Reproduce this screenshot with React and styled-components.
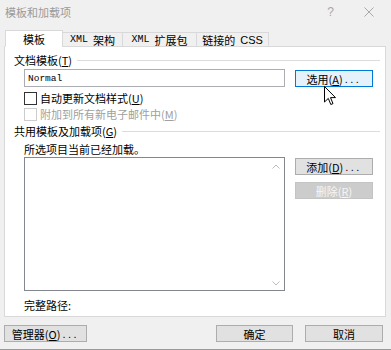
import React from "react";
import styled, { createGlobalStyle } from "styled-components";

const GlobalStyle = createGlobalStyle`
  html, body {
    margin: 0;
    padding: 0;
    background: #f0f0f0;
  }
  * {
    box-sizing: border-box;
  }
`;

const cjk = `"Noto Sans CJK SC", "Liberation Sans", sans-serif`;
const mono = `"Liberation Mono", "Noto Sans CJK SC", monospace`;

const Dialog = styled.div`
  position: relative;
  width: 391px;
  height: 350px;
  background: #f0f0f0;
  border-bottom: 1px solid #9a9a9a;
  font-family: ${cjk};
  font-size: 11px;
  color: #000;
  display: flex;
  flex-direction: column;
`;

const TitleBar = styled.div`
  height: 30px;
  display: flex;
  align-items: flex-start;
  padding: 4px 0 0 5px;
  color: #9a9a9a;
  font-size: 11px;
  line-height: 16px;
`;

const TitleText = styled.span`
  flex: 1;
`;

const TitleButtons = styled.div`
  display: flex;
  align-items: center;
  gap: 30px;
  padding-right: 17px;
  height: 16px;
`;

const HelpMark = styled.span`
  font-family: "Liberation Sans", sans-serif;
  font-size: 12px;
  color: #a8a8a8;
`;

const TabStrip = styled.div`
  display: flex;
  align-items: flex-end;
  margin: 0 0 -1px 5px;
  height: 17px;
  position: relative;
  z-index: 1;
`;

const Tab = styled.div`
  width: ${(p) => p.$w}px;
  height: ${(p) => (p.$active ? 17 : 15)}px;
  display: flex;
  align-items: center;
  justify-content: center;
  gap: 5px;
  background: ${(p) => (p.$active ? "#fff" : "#f0f0f0")};
  border: 1px solid #d9d9d9;
  border-bottom: ${(p) => (p.$active ? "1px solid #fff" : "1px solid #d9d9d9")};
  margin-left: ${(p) => (p.$active ? 0 : -1)}px;
  font-size: 11px;
  line-height: 14px;
`;

const Mono = styled.span`
  font-family: ${mono};
  font-size: 10px;
`;

const Latin = styled.span`
  font-family: "Liberation Sans", sans-serif;
`;

const Dots = styled.span`
  font-family: "Liberation Sans", sans-serif;
  letter-spacing: 2.5px;
  margin-left: 2px;
`;

const Panel = styled.div`
  height: 271px;
  margin: 0 5px 0 4px;
  background: #fff;
  border: 1px solid #d9d9d9;
  padding: 6px 5px 0 9px;
  display: flex;
  flex-direction: column;
`;

const GroupHeader = styled.div`
  display: flex;
  align-items: center;
  gap: 5px;
  height: 14px;
  margin-top: ${(p) => p.$top || 0}px;
  line-height: 14px;
  white-space: nowrap;

  &::after {
    content: "";
    flex: 1;
    height: 1px;
    background: #dcdcdc;
  }
`;

const Indented = styled.div`
  margin-left: 10px;
  margin-top: ${(p) => p.$top || 0}px;
`;

const FieldRow = styled.div`
  display: flex;
  align-items: flex-start;
  gap: 10px;
  margin: 2px 0 0 10px;
`;

const TextInput = styled.div`
  width: 261px;
  height: 18px;
  border: 1px solid #abadb3;
  background: #fff;
  padding: 0 3px;
  display: flex;
  align-items: center;
  font-family: ${mono};
  font-size: 9.5px;
`;

const Button = styled.div`
  width: ${(p) => p.$w || 78}px;
  height: 17px;
  margin-top: ${(p) => p.$top || 0}px;
  display: flex;
  align-items: center;
  justify-content: center;
  background: ${(p) =>
    p.$focus ? "#e5f1fb" : p.$disabled ? "#cccccc" : "#e1e1e1"};
  border: 1px solid
    ${(p) => (p.$focus ? "#0078d7" : p.$disabled ? "#c4c4c4" : "#adadad")};
  color: ${(p) => (p.$disabled ? "#f6f6f6" : "#000")};
  font-size: 11px;
  line-height: 14px;
  white-space: nowrap;
`;

const CheckRow = styled.div`
  display: flex;
  align-items: center;
  gap: 3px;
  height: 16px;
  margin: ${(p) => p.$top || 0}px 0 0 10px;
  color: ${(p) => (p.$disabled ? "#a0a0a0" : "#000")};
`;

const Box = styled.span`
  width: 13px;
  height: 13px;
  border: 1px solid ${(p) => (p.$disabled ? "#cccccc" : "#333")};
  background: #fff;
`;

const ListArea = styled.div`
  display: flex;
  align-items: flex-start;
  gap: 10px;
  margin-left: 10px;
`;

const ListBox = styled.div`
  width: 261px;
  height: 134px;
  border: 1px solid #828790;
  background: #fff;
  display: flex;
  justify-content: flex-end;
`;

const ScrollTrack = styled.div`
  width: 15px;
  display: flex;
  flex-direction: column;
  justify-content: space-between;
  align-items: center;
  padding: 6px 2px 4px 0;
`;

const SideButtons = styled.div`
  display: flex;
  flex-direction: column;
  gap: 7px;
  padding-top: 1px;
`;

const ButtonBar = styled.div`
  display: flex;
  justify-content: space-between;
  align-items: center;
  margin-top: 8px;
  padding: 0 8px 0 4px;
`;

const ButtonGroup = styled.div`
  display: flex;
  gap: 12px;
`;

const Cursor = styled.svg`
  position: absolute;
  left: 324px;
  top: 86px;
`;

const Chevron = ({ up }) => (
  <svg width="8" height="5" viewBox="0 0 8 5">
    <path
      d={up ? "M0.5 4.5 L4 1 L7.5 4.5" : "M0.5 0.5 L4 4 L7.5 0.5"}
      fill="none"
      stroke="#bdbdbd"
      strokeWidth="1"
    />
  </svg>
);

const CloseIcon = () => (
  <svg width="10" height="10" viewBox="0 0 10 10">
    <path d="M0.5 0.5 L9.5 9.5 M9.5 0.5 L0.5 9.5" stroke="#a8a8a8" strokeWidth="1" />
  </svg>
);

const App = () => {
  return (
    <>
      <GlobalStyle />
      <Dialog>
        <TitleBar>
          <TitleText>模板和加载项</TitleText>
          <TitleButtons>
            <HelpMark>?</HelpMark>
            <CloseIcon />
          </TitleButtons>
        </TitleBar>

        <TabStrip>
          <Tab $w={58} $active>模板</Tab>
          <Tab $w={61}>
            <Mono>XML</Mono>架构
          </Tab>
          <Tab $w={75}>
            <Mono>XML</Mono>扩展包
          </Tab>
          <Tab $w={73}>
            链接的 <Latin>CSS</Latin>
          </Tab>
        </TabStrip>

        <Panel>
          <GroupHeader>
            <span>
              文档模板(<u>T</u>)
            </span>
          </GroupHeader>
          <FieldRow>
            <TextInput>Normal</TextInput>
            <Button $focus $top={1}>
              选用(<u>A</u>)<Dots>...</Dots>
            </Button>
          </FieldRow>
          <CheckRow $top={3}>
            <Box />
            <span>
              自动更新文档样式(<u>U</u>)
            </span>
          </CheckRow>
          <CheckRow $disabled>
            <Box $disabled />
            <span>
              附加到所有新电子邮件中(<u>M</u>)
            </span>
          </CheckRow>

          <GroupHeader $top={2}>
            <span>
              共用模板及加载项(<u>G</u>)
            </span>
          </GroupHeader>
          <Indented $top={3}>所选项目当前已经加载。</Indented>
          <ListArea>
            <ListBox>
              <ScrollTrack>
                <Chevron up />
                <Chevron />
              </ScrollTrack>
            </ListBox>
            <SideButtons>
              <Button>
                添加(<u>D</u>)<Dots>...</Dots>
              </Button>
              <Button $disabled>
                删除(<u>R</u>)
              </Button>
            </SideButtons>
          </ListArea>
          <Indented $top={6}>完整路径:</Indented>
        </Panel>

        <ButtonBar>
          <Button $w={83}>
            管理器(<u>O</u>)<Dots>...</Dots>
          </Button>
          <ButtonGroup>
            <Button $w={77}>确定</Button>
            <Button $w={78}>取消</Button>
          </ButtonGroup>
        </ButtonBar>

        <Cursor width="13" height="20" viewBox="0 0 13 20">
          <path
            d="M0.5 0.5 L0.5 16 L4.3 12.4 L6.8 18.5 L9 17.6 L6.5 11.6 L11.5 11.6 Z"
            fill="#fff"
            stroke="#000"
            strokeWidth="1"
            strokeLinejoin="round"
          />
        </Cursor>
      </Dialog>
    </>
  );
};

export default App;
